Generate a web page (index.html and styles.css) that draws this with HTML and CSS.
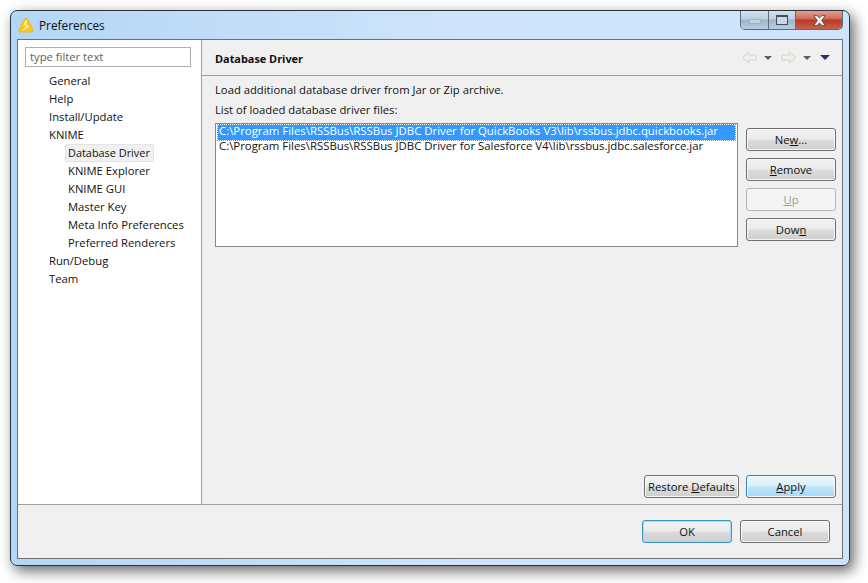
FILE: index.html
```html
<!DOCTYPE html>
<html lang="en">
<head>
<meta charset="utf-8">
<title>Preferences</title>
<link rel="stylesheet" href="styles.css">
</head>
<body>
<div class="window">
  <div class="titlebar">
    <svg class="app-icon" width="16" height="16" viewBox="0 0 16 16"><path d="M8 1 L10 3 L15 13 L14 15 H1 L1 13 L6 3 Z" fill="#f7c81e" stroke="#eeb010" stroke-width=".8"/><path d="M8.5 3.5 L6.5 7.5 L10 9.5 L5 13" fill="none" stroke="#fff3b0" stroke-width="1.5"/></svg>
    <span class="title">Preferences</span>
    <div class="caption">
      <div class="cap cap-min"><span class="glyph-min"></span></div>
      <div class="cap cap-max"><span class="glyph-max"></span></div>
      <div class="cap cap-close"><svg width="13" height="11" viewBox="0 0 13 11"><path d="M.8 .6 H4 L6.5 3 L9 .6 H12.2 L8.6 5.5 L12.2 10.4 H9 L6.5 8 L4 10.4 H.8 L4.4 5.5 Z" fill="#fff" stroke="#5a4a4a" stroke-width=".9"/></svg></div>
    </div>
  </div>
  <div class="client">
    <div class="main">
      <aside class="sidebar">
        <div class="filter">type filter text</div>
        <ul class="tree">
          <li>General</li>
          <li>Help</li>
          <li>Install/Update</li>
          <li>KNIME</li>
          <li class="sub selected"><span>Database Driver</span></li>
          <li class="sub">KNIME Explorer</li>
          <li class="sub">KNIME GUI</li>
          <li class="sub">Master Key</li>
          <li class="sub">Meta Info Preferences</li>
          <li class="sub">Preferred Renderers</li>
          <li>Run/Debug</li>
          <li>Team</li>
        </ul>
      </aside>
      <section class="page">
        <header class="page-head">
          <h1>Database Driver</h1>
          <div class="nav">
            <svg class="arrow" width="15" height="13" viewBox="0 0 15 13"><path d="M.7 6.5 L6.5 1 V4 H14 V9 H6.5 V12 Z" fill="#f1f1ea" stroke="#d2d2ca"/></svg>
            <span class="tri"></span>
            <svg class="arrow second" width="15" height="13" viewBox="0 0 15 13"><path d="M14.3 6.5 L8.5 1 V4 H1 V9 H8.5 V12 Z" fill="#f1f1ea" stroke="#d2d2ca"/></svg>
            <span class="tri"></span>
            <span class="tri tri-menu"></span>
          </div>
        </header>
        <div class="page-body">
          <p class="line-one">Load additional database driver from Jar or Zip archive.</p>
          <p class="line-two">List of loaded database driver files:</p>
          <div class="files">
            <div class="list">
              <div class="item item-selected">C:\Program Files\RSSBus\RSSBus JDBC Driver for QuickBooks V3\lib\rssbus.jdbc.quickbooks.jar</div>
              <div class="item">C:\Program Files\RSSBus\RSSBus JDBC Driver for Salesforce V4\lib\rssbus.jdbc.salesforce.jar</div>
            </div>
            <div class="side-buttons">
              <button class="btn wide">Ne<u>w</u>...</button>
              <button class="btn wide"><u>R</u>emove</button>
              <button class="btn wide disabled"><u>U</u>p</button>
              <button class="btn wide">Dow<u>n</u></button>
            </div>
          </div>
          <div class="page-actions">
            <button class="btn restore">Restore <u>D</u>efaults</button>
            <button class="btn wide hot"><u>A</u>pply</button>
          </div>
        </div>
      </section>
    </div>
    <footer class="footer">
      <button class="btn wide default">OK</button>
      <button class="btn wide">Cancel</button>
    </footer>
  </div>
</div>
</body>
</html>
```

FILE: styles.css
```css
* { box-sizing: border-box; }
html, body { margin: 0; height: 100%; }
body {
  background: #fff;
  padding: 10px 18px 17px 10px;
  font-family: "Open Sans", "Noto Sans", sans-serif;
  font-size: 11.25px;
  color: #111;
  overflow: hidden;
}
.window {
  height: 556px;
  border: 1px solid #2e3238;
  border-radius: 7px;
  background: linear-gradient(90deg, #b4d6f6 0, #cfe4fa 55%, #cde4fb 100%);
  padding: 0 6px 6px;
  display: flex;
  flex-direction: column;
  box-shadow: 4px 5px 14px rgba(0,0,0,.6);
}
.titlebar {
  height: 28px;
  flex: none;
  display: flex;
  align-items: center;
  padding-left: 1px;
}
.app-icon { flex: none; }
.title {
  margin-left: 5px;
  font-size: 11.8px;
  color: #111;
}
.caption {
  display: flex;
  margin-left: auto;
  height: 19px;
  align-self: flex-start;
  border: 1px solid #5d6b7c;
  border-top: 0;
  border-radius: 0 0 5px 5px;
  overflow: hidden;
}
.cap { display: flex; align-items: center; justify-content: center; }
.cap-min, .cap-max {
  width: 28px;
  background: linear-gradient(#d4e0ec 0, #bccfe2 45%, #9db5cc 50%, #b8cde0 100%);
  border-right: 1px solid #5d6b7c;
}
.cap-max { width: 27px; }
.cap-close {
  width: 46px;
  background: linear-gradient(#e2a090 0, #d07060 40%, #b83c24 52%, #c8604a 100%);
}
.glyph-min { width: 12px; height: 5px; border: 1px solid #a3b3c4; background: #c6d4e2; margin-top: 3px; }
.glyph-max { width: 12px; height: 10px; border: 1px solid #3f4e60; border-top-width: 2px; background: #cad8e6; }
.client {
  flex: 1;
  min-height: 0;
  border: 1px solid #6b7078;
  background: #f0f0f0;
  display: flex;
  flex-direction: column;
}
.main { flex: none; height: 465px; display: flex; border-bottom: 1px solid #a0a0a0; }
.sidebar {
  width: 184px;
  flex: none;
  background: #fff;
  border-right: 1px solid #a0a0a0;
  padding: 7px 10px 0 7px;
}
.filter {
  width: 166px;
  height: 20px;
  border: 1px solid #abadb3;
  background: #fff;
  color: #5e5e5e;
  line-height: 17px;
  padding-left: 4px;
}
.tree { list-style: none; margin: 5px 0 0; padding: 0; }
.tree li { height: 18px; line-height: 18px; padding-left: 24px; white-space: nowrap; }
.tree li.sub { padding-left: 43px; }
.tree li.selected { padding-left: 40px; }
.tree li.selected span {
  display: inline-block;
  height: 18px;
  line-height: 15px;
  padding: 0 3px 0 2px;
  background: #f0f0f0;
  border: 1px solid #e4e4e4;
  border-radius: 2px;
  font-size: 10.9px;
}
.page { flex: 1; min-width: 0; display: flex; flex-direction: column; }
.page-head {
  height: 36px;
  flex: none;
  border-bottom: 1px solid #a0a0a0;
  display: flex;
  align-items: center;
  padding: 0 12px 0 13px;
}
.page-head h1 { margin: 0 0 -2px; font-size: 10.9px; font-weight: 700; color: #111; }
.nav { margin-left: auto; display: flex; align-items: center; }
.arrow { display: block; }
.arrow.second { margin-left: 9px; }
.tri {
  width: 0; height: 0;
  margin-left: 7px;
  border-left: 4px solid transparent;
  border-right: 4px solid transparent;
  border-top: 4px solid #5e5e5e;
}
.tri-menu { margin-left: 9px; border-left-width: 5px; border-right-width: 5px; border-top: 5px solid #2d2a78; }
.page-body { flex: 1; min-height: 0; padding: 5px 6px 6px 13px; display: flex; flex-direction: column; }
.page-body p { margin: 0; height: 18px; line-height: 18px; }
.line-two { margin-top: 2px !important; }
.files { display: flex; margin-top: 4px; }
.list {
  width: 523px;
  height: 124px;
  flex: none;
  background: #fff;
  border: 1px solid #828790;
  padding: 1px 2px;
}
.item { height: 15px; line-height: 11px; padding-left: 1px; white-space: nowrap; font-size: 11.39px; }
.item-selected { background: #3399ff; color: #fff; outline: 1px dotted #e67a1a; }
.side-buttons { display: flex; flex-direction: column; gap: 7px; margin-left: 8px; padding-top: 5px; }
.btn {
  height: 23px;
  padding: 0;
  font: inherit;
  color: #111;
  border: 1px solid #707070;
  border-radius: 3px;
  background: linear-gradient(#f2f2f2 0, #ebebeb 48%, #dcdcdc 52%, #cfcfcf 100%);
  box-shadow: inset 0 0 0 1px #f6f6f6;
}
.btn.wide { width: 90px; }
.btn.disabled {
  color: #9a9a9a;
  border-color: #b5b5b5;
  background: #f4f4f4;
  box-shadow: none;
}
.btn.hot {
  border-color: #3c7fb1;
  background: linear-gradient(#eaf6fd 0, #d9f0fc 48%, #bee6fd 52%, #a7d9f5 100%);
}
.btn.default {
  border-color: #3c95c4;
  box-shadow: inset 0 0 0 1px #a5dcf0;
}
.btn.restore { width: 95px; }
.page-actions { margin-top: auto; display: flex; justify-content: flex-end; gap: 7px; }
.footer {
  flex: 1;
  display: flex;
  justify-content: flex-end;
  gap: 8px;
  padding: 15px 12px 0 0;
}
```
